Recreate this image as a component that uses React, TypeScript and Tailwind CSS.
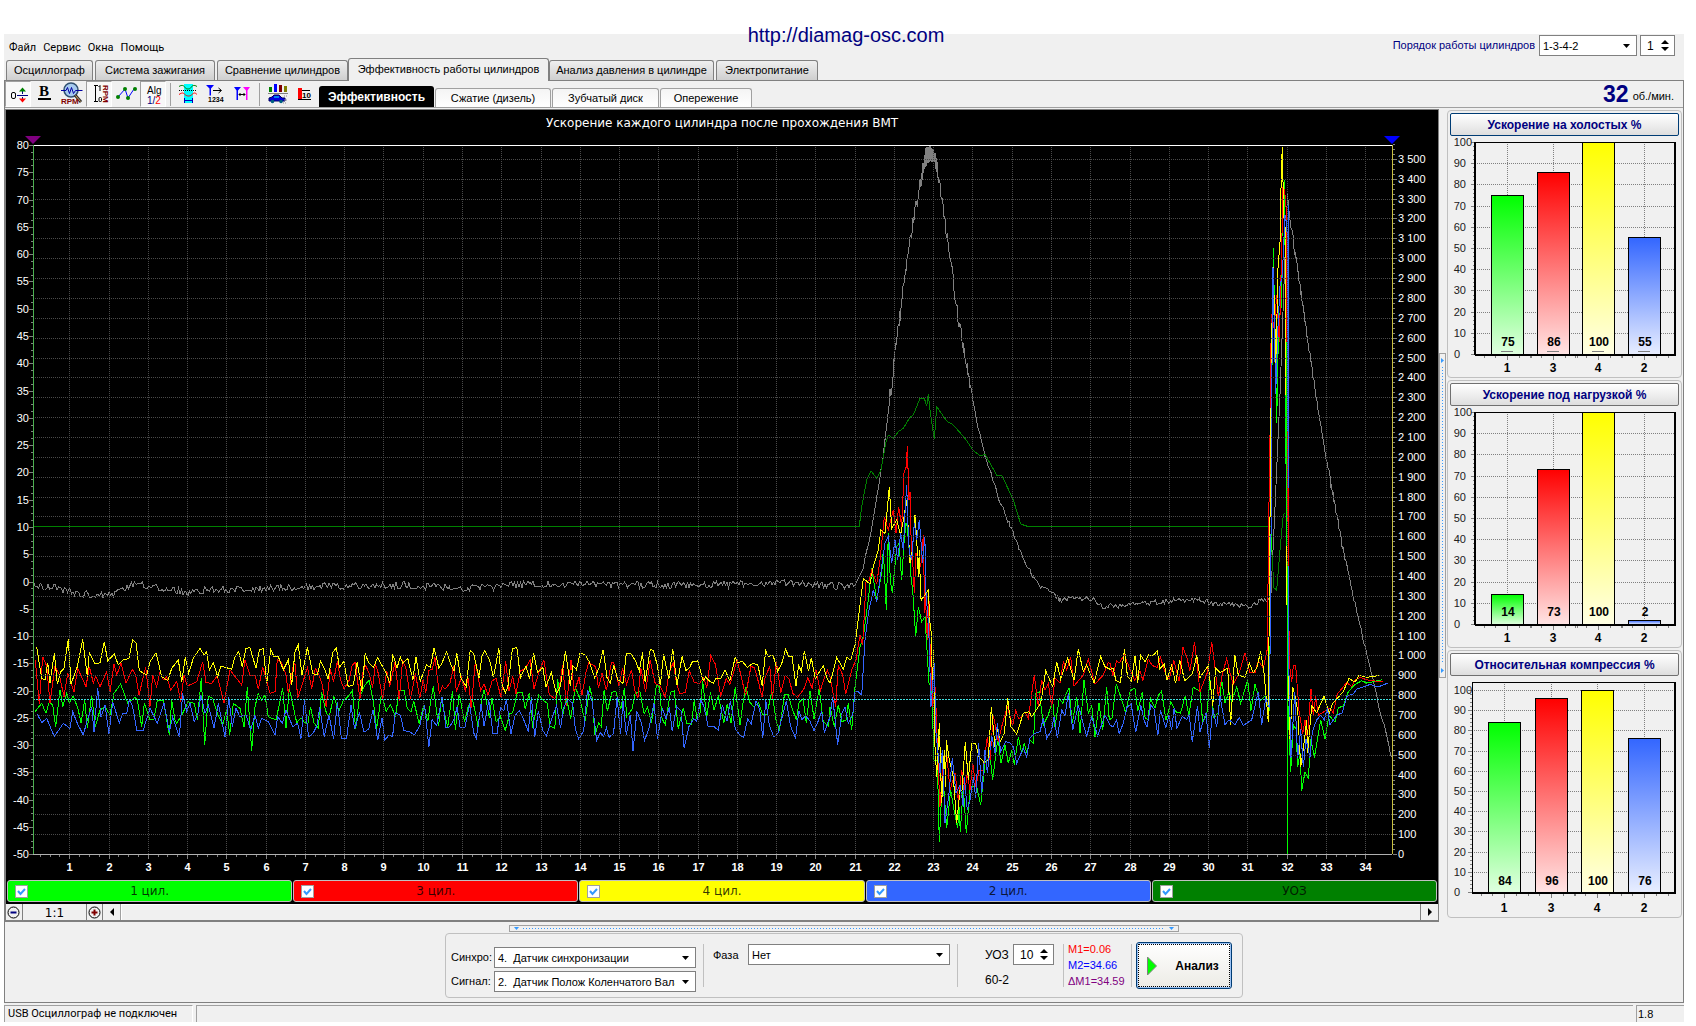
import { useState } from 'react'
import type { ReactNode } from 'react'
import { clsx } from 'clsx'

type Point = [number, number]

const MAIN_TABS = [
  { label: 'Осциллограф', width: 'w-[87px]' },
  { label: 'Система зажигания', width: 'w-[120px]' },
  { label: 'Сравнение цилиндров', width: 'w-[131px]' },
  { label: 'Эффективность работы цилиндров', width: 'w-[201px]' },
  { label: 'Анализ давления в цилиндре', width: 'w-[165px]' },
  { label: 'Электропитание', width: 'w-[102px]' },
]

const SUB_TABS = [
  { label: 'Эффективность', width: 'w-[115px]' },
  { label: 'Сжатие (дизель)', width: 'w-[116px]' },
  { label: 'Зубчатый диск', width: 'w-[107px]' },
  { label: 'Опережение', width: 'w-[92px]' },
]

const LEGEND = [
  { label: '1 цил.', bg: 'bg-[#00ff00]' },
  { label: '3 цил.', bg: 'bg-[#ff0000]' },
  { label: '4 цил.', bg: 'bg-[#ffff00]' },
  { label: '2 цил.', bg: 'bg-[#3366ff]' },
  { label: 'УОЗ', bg: 'bg-[#008000]' },
]

/* ---------- traces ---------- */

// raw "x,y" pairs -> plot coordinates
function seg(x0: number, y0: number, sx: number, sy: number, raw: string): Point[] {
  return raw
    .trim()
    .split(/\s+/)
    .map((p) => {
      const [x, y] = p.split(',').map(Number)
      return [x0 + x / sx, y0 + y / sy]
    })
}

function rng(seed: number) {
  let s = seed
  return () => {
    s = (s * 16807) % 2147483647
    return s / 2147483647
  }
}

// idle running: jumps up and down around the mean with a rare spike
function idle(seed: number, from: number, to: number, mean: number, amp: number): Point[] {
  const rand = rng(seed)
  const out: Point[] = []
  let x = from
  let side = 1
  while (x < to) {
    const spike = rand() > 0.9 ? 1.5 : 1
    out.push([x, mean + side * amp * rand() * spike])
    x += 2.5 + rand() * 3
    if (rand() > 0.35) side = -side
  }
  return out
}

// fine jitter along a base line
function jitter(seed: number, base: Point[], amp: number, step = 1.5): Point[] {
  const rand = rng(seed)
  const out: Point[] = []
  for (let i = 0; i < base.length - 1; i++) {
    const [x1, y1] = base[i]
    const [x2, y2] = base[i + 1]
    for (let x = x1; x < x2; x += step) {
      out.push([x, y1 + ((y2 - y1) * (x - x1)) / (x2 - x1) + (rand() - 0.5) * amp])
    }
  }
  return out
}

const a = (raw: string) => seg(0, 560, 3, 3, raw)
const b = (raw: string) => seg(830, 560, 3, 3, raw)
const c = (raw: string) => seg(830, 130, 3, 3, raw)
const d = (raw: string) => seg(1200, 130, 3, 2.119, raw)

const YELLOW: Point[] = [
  ...a('110,262 125,355 135,360 143,308 150,368 163,278 172,372 182,335 192,325 205,236 213,372 232,320 248,238 262,350 268,278 285,312 300,308 313,246 323,302 343,282 355,315 370,300 387,295 398,240 408,248 418,332 440,345 450,305 468,278 485,350 503,362 515,325 535,300 545,365 556,292 566,340 580,295 600,265 612,285 620,275 628,330 640,308 653,350 663,318 695,328 705,290 716,275 727,320 738,265 750,263 768,325 778,270 790,265 800,372 812,268 822,290 835,290 850,330 865,300 875,375 885,275 895,255'),
  ...idle(41, 302, 829, 667, 20),
  ...b('0,370 20,292 40,328 50,292 62,300 75,255 100,55 120,72 130,20'),
  ...c('145,1260 152,1200 165,1210 178,1070 185,1195 200,1170 212,1215 220,1170 230,1110 240,1300 247,1260 255,1155 262,1260 265,1340 268,1260 272,1400'),
  ...b('274,120 295,90 300,190 305,230 307,400 311,270 315,560 320,650 328,490 335,730 343,570 347,680 349,540 358,600 370,650 380,790 390,690 396,690 406,545 415,660 425,550 437,550 447,590 463,608 475,600 484,440 495,560 503,500 510,545 523,520 533,415 543,500 560,522 580,460 597,455 605,470 632,430 647,332 668,380 680,305 692,358 713,295 732,360 745,268 760,335 770,315 792,368 812,290 825,320 840,328'),
  ...idle(77, 1113, 1198, 666, 17),
  ...d('0,1160 25,1135 38,1220 47,1140 60,1150 83,1140 92,1260 104,1112 115,1155 135,1160 148,1130 160,1150 170,1140 182,1105 192,1150 205,1255 209,900 212,650 216,410 219,290 224,390 228,520 233,300 240,240 244,90 247,36 251,180 257,220 259,880 262,1060 264,1130 270,1290 278,1180 285,1200 293,1230 302,1350 312,1300 320,1250 323,1320 335,1220 350,1235 372,1200 388,1235 398,1215 430,1190 447,1162 465,1170 478,1155 500,1160 537,1156'),
]

const RED: Point[] = [
  ...a('106,300 118,432 128,290 140,318 150,428 165,318 178,345 192,410 203,340 222,395 233,325 258,380 268,320 280,368 287,348 300,380 320,335 330,395 342,312 350,345 363,310 378,370 397,328 407,345 417,405 437,320 450,440 458,345 470,380 480,335 490,360 500,350 512,390 530,365 542,425 552,345 562,378 590,365 608,305 618,368 635,370 652,348 672,428 690,330 725,375 735,300 750,345 765,345 775,388 788,320 810,400 825,395 832,298 845,310 858,345 865,400 880,318 885,310 893,415'),
  ...idle(1203, 302, 829, 680, 20),
  ...b('0,350 17,440 25,315 38,345 47,402 65,330 78,300 90,225 98,255 108,65 117,62 125,30 140,72 150,0'),
  ...c('152,1270 163,1160 175,1200 190,1140 198,1210 206,1130 215,1190 222,1030 229,1010 232,948 237,1110 240,1085 244,1250 248,1290 253,1390 258,1270 272,1310 280,1215 284,1450'),
  ...b('286,100 292,240 297,120 300,250 308,440 316,380 322,560 330,740 340,600 350,580 360,690 375,640 385,720 395,630 405,690 412,640 420,690 428,610 438,680 447,630 460,630 472,530 480,600 490,465 505,545 515,500 532,440 548,498 557,452 567,478 585,455 595,475 613,345 625,440 635,360 645,390 655,370 665,440 675,355 690,370 700,305 710,330 722,292 732,378 760,345 775,298 795,372 820,345 835,308 840,310'),
  ...idle(915, 1113, 1198, 668, 21),
  ...d('0,1190 22,1150 35,1085 45,1140 55,1200 68,1150 80,1120 90,1150 100,1175 118,1150 135,1108 150,1150 165,1150 175,1125 190,1140 202,1100 206,830 210,650 212,480 215,390 222,420 230,350 238,450 245,250 249,120 254,130 260,180 260,450 263,760 268,1130 275,1170 280,1135 287,1135 297,1230 308,1280 315,1250 322,1290 333,1185 340,1240 347,1200 355,1240 390,1225 400,1235 412,1195 430,1180 440,1170 455,1180 465,1165 480,1160 500,1165 550,1170'),
]

const GREEN: Point[] = [
  ...a('105,455 125,430 138,460 148,425 158,435 167,500 180,390 188,440 200,400 208,430 220,408 235,450 243,490 254,420 262,505 275,405 286,500 300,450 315,440 330,465 342,400 362,372 383,430 405,412 412,420 425,500 433,430 450,480 462,478 472,420 490,420 508,525 515,420 525,480 530,490 548,460 565,425 583,430 592,480 604,355 614,555 625,408 638,415 650,455 668,495 680,450 689,525 700,430 720,445 732,500 742,382 755,572 765,440 775,400 785,420 795,405 805,470 828,480 848,385 858,505 868,385 890,488'),
  ...idle(5150, 301, 829, 708, 23),
  ...b('0,440 13,500 25,435 35,485 48,480 55,430 65,510 75,380 90,260 100,230 115,120 125,25 140,120 155,40'),
  ...c('160,1260 169,1440 175,1210 181,1350 187,1390 200,1250 207,1240 215,1350 222,1240 228,1180 232,1190 240,1290'),
  ...b('243,50 248,90 257,230 265,140 275,185 285,170 297,370 305,385 312,600 322,600 328,845 338,640 350,805 362,690 372,750 383,805 387,740 391,815 400,680 409,820 420,690 428,680 440,680 452,735 465,610 480,590 488,660 500,560 505,540 513,610 525,555 535,610 545,570 553,615 565,530 575,580 583,550 590,580 600,540 610,550 618,400 628,395 640,495 655,465 668,420 675,500 688,415 698,430 707,405 717,385 727,490 740,410 750,520 762,360 775,460 785,435 795,530 807,430 818,510 830,380 838,480'),
  ...idle(333, 1112, 1198, 702, 20),
  ...d('0,1190 8,1255 20,1240 30,1165 42,1245 55,1235 65,1165 75,1215 87,1190 95,1210 110,1180 122,1215 143,1165 153,1230 165,1175 180,1210 195,1200 208,1230 213,900 216,500 220,250 224,400 230,620 236,400 243,380 247,180 253,105 256,300 259,870 262,930 262,1532 264,1220 272,1360 280,1260 288,1270 293,1350 300,1320 305,1400 315,1360 325,1375 333,1290 343,1330 362,1250 375,1290 387,1240 405,1255 415,1225 430,1220 445,1190 465,1175 485,1167 500,1172 545,1165'),
]

const BLUE: Point[] = [
  ...a('112,462 125,488 140,475 163,530 190,490 210,505 218,455 232,490 250,525 262,480 275,440 282,515 293,385 303,470 315,435 327,522 338,425 358,490 368,460 380,462 388,420 398,440 410,510 430,510 450,445 472,490 492,430 508,515 518,470 538,530 548,400 560,455 570,430 583,485 593,465 603,405 615,460 625,435 642,505 655,430 675,530 686,412 697,500 708,445 720,470 738,465 752,510 765,465 775,505 785,475 805,485 825,525 833,470 847,490 858,450 878,500 893,490'),
  ...idle(8088, 301, 829, 720, 21),
  ...b('0,470 8,410 23,555 35,460 45,440 55,490 68,465 75,395 85,395 95,405 105,240 115,160 130,90 140,125 155,20'),
  ...c('165,1240 175,1220 185,1300 195,1230 203,1290 212,1210 220,1260 226,1130 230,1065 234,1190 238,1270 245,1290 253,1180 260,1230 268,1170 278,1300 284,1220 287,1290'),
  ...b('288,100 296,200 303,440 313,310 318,520 330,640 337,570 345,790 357,700 367,595 378,700 390,675 400,740 403,650 412,750 420,720 430,650 437,715 446,550 455,700 465,570 472,640 485,525 495,580 502,490 512,575 527,545 540,548 550,560 560,610 580,565 590,590 600,535 615,520 630,515 640,475 650,535 665,510 672,470 682,535 695,450 705,468 715,400 728,510 745,435 770,530 785,470 803,528 825,465 840,495'),
  ...idle(64, 1113, 1198, 720, 17),
  ...d('0,1275 18,1235 28,1310 38,1225 50,1265 60,1200 75,1260 87,1250 105,1260 118,1245 130,1262 155,1250 175,1190 185,1260 197,1205 208,1225 212,1000 215,560 219,290 227,560 233,430 240,330 247,310 255,180 260,200 262,230 264,640 266,1130 273,1330 284,1190 293,1330 302,1270 310,1350 318,1290 330,1330 337,1275 350,1250 362,1240 373,1250 382,1225 390,1260 410,1240 427,1235 440,1200 460,1195 470,1185 490,1180 510,1175 535,1180 563,1172'),
]

const ADVANCE: Point[] = [
  [33, 526.5],
  ...c('88,1189 95,1130 110,1050 123,1022 140,1045 153,1020 168,935 175,915 190,925 205,905 220,895 240,862 250,855 270,805 283,805 290,828 295,793 300,840 313,928 320,830 350,873 370,885 405,925 430,962 452,978 465,973 500,1035 515,1035 550,1110 572,1182 592,1189'),
  ...d('213,840 216,900 222,970 230,975 240,890 250,815 255,812'),
]

const SPEED: Point[] = [
  ...jitter(19, [[34, 587], [48, 586], [70, 592], [100, 596], [112, 595], [135, 584], [165, 588], [188, 593], [205, 590], [260, 589], [330, 586], [400, 585], [450, 588], [480, 588], [530, 584], [620, 585], [700, 585], [780, 583], [840, 586], [855, 584]], 7),
  ...b('75,75 100,25'),
  ...jitter(23, c('105,1290 125,1200 140,1100 158,990 170,890 180,800'), 4),
  ...jitter(37, c('180,800 195,680 210,550 230,400 250,270 275,140 285,95 300,75 313,75 320,110 340,240 360,380 385,560 400,650 425,790'), 16, 0.8),
  ...jitter(43, c('425,790 450,920 465,980 490,1050 515,1130 540,1185 570,1265 597,1320'), 5),
  ...jitter(29, [...b('600,35 610,50 635,85 665,98 690,120 715,115 785,115 820,140'), [1130, 605], [1180, 600], ...d('0,995 30,1003 70,1005 150,1010 190,995 215,993')], 5),
  ...d('215,950 225,800 240,560 255,270 262,145'),
  ...jitter(31, d('262,145 270,190 290,280 320,430 360,620 390,740 430,890'), 9, 0.8),
  ...jitter(53, d('430,890 470,1020 500,1110 530,1200 577,1335'), 5),
]

// the speed signal swings between neighbouring teeth around its maximum
const SPEED_PEAK = c('271,150 273,170 275,128 277,150 279,100 281,130 283,80 285,118 286,55 289,108 290,52 292,98 294,50 296,95 298,48 300,95 302,48 304,95 306,55 308,95 310,60 312,96 314,68 316,110 318,82 320,125 322,95 324,145')

const toPoints = (pts: Point[]) => pts.map(([x, y]) => `${x.toFixed(1)},${y.toFixed(1)}`).join(' ')

const PLOT = { left: 33, right: 1392, top: 145, bottom: 854 }
const timeX = (t: number) => Math.round(31 + t * 39.27) - 0.5
const levelY = (v: number) => Math.round(581.5 - v * 5.456) + 0.5
const rpmY = (v: number) => Math.round(854 - v * 0.1986) + 0.5

function MainChart({ visible }: { visible: boolean[] }) {
  const levels = Array.from({ length: 27 }, (_, i) => 80 - i * 5)
  const speeds = Array.from({ length: 36 }, (_, i) => i * 100)
  const times = Array.from({ length: 34 }, (_, i) => i + 1)
  const { left, right, top, bottom } = PLOT

  return (
    <svg
      viewBox="6 110 1432 770"
      className="block h-auto w-full bg-black font-['Liberation_Sans',Arial,sans-serif] text-[11px]"
      role="img"
      aria-label="Ускорение каждого цилиндра после прохождения ВМТ"
    >
      <text x="722" y="127" textAnchor="middle" fill="#fff" className="font-['DejaVu_Sans',Verdana,sans-serif] text-[12px]">
        Ускорение каждого цилиндра после прохождения ВМТ
      </text>
      <g fill="none" strokeWidth="1" shapeRendering="crispEdges">
        <polyline points={toPoints(SPEED)} stroke="#808080" />
        <polyline points={toPoints(SPEED_PEAK)} stroke="#808080" />
        {visible[4] && <polyline points={toPoints(ADVANCE)} stroke="#008000" />}
        {visible[0] && <polyline points={toPoints(GREEN)} stroke="#00ff00" />}
        {visible[1] && <polyline points={toPoints(RED)} stroke="#ff0000" />}
        {visible[2] && <polyline points={toPoints(YELLOW)} stroke="#ffff00" />}
        {visible[3] && <polyline points={toPoints(BLUE)} stroke="#3366ff" />}
        <g stroke="#4a4a4a" strokeDasharray="1 1">
          {times.map((t) => (
            <path key={t} d={`M${timeX(t)} ${top}V${bottom}`} />
          ))}
          {speeds.slice(1).map((v) => (
            <path key={v} d={`M${left} ${rpmY(v)}H${right}`} />
          ))}
        </g>
        {/* engine stop: every trace drops at once */}
        {visible[3] && <path d="M1288.5 205V488" stroke="#3366ff" />}
        {visible[1] && <path d="M1286.5 250V342M1288.5 488V566" stroke="#ff0000" />}
        {visible[0] && <path d="M1286.5 342V546M1287.5 566V854" stroke="#00ff00" />}
        <path d={`M${left} 699.5H${right}`} stroke="#40e0e0" strokeDasharray="2 1" />
        <path d={`M${left} 145.5H${right}`} stroke="#fff" />
        <path d={`M${left} 854.5H${right}`} stroke="#b0b0b0" />
        <path d="M33.5 145V854" stroke="#4caf50" />
        <path d="M1392.5 145V854" stroke="#c8c040" />
      </g>
      <g stroke="#808080" shapeRendering="crispEdges">
        {levels.map((v) => (
          <path key={v} d={`M29 ${levelY(v)}h4`} />
        ))}
        {levels.slice(0, -1).flatMap((v) =>
          [1, 2, 3].map((k) => <path key={`${v}-${k}`} d={`M31 ${levelY(v - k * 1.25)}h2`} />)
        )}
        {speeds.map((v) => (
          <path key={v} d={`M1393 ${rpmY(v)}h4M1393 ${rpmY(v + 25)}h2M1393 ${rpmY(v + 50)}h2M1393 ${rpmY(v + 75)}h2`} />
        ))}
        {times.map((t) => (
          <path key={t} d={`M${timeX(t)} 855v4M${timeX(t - 0.25)} 855v2M${timeX(t - 0.5)} 855v2M${timeX(t - 0.75)} 855v2`} />
        ))}
      </g>
      <g fill="#fff">
        {levels.map((v) => (
          <text key={v} x="29" y={levelY(v) + 3} textAnchor="end">
            {v}
          </text>
        ))}
        {speeds.map((v) => (
          <text key={v} x="1398" y={rpmY(v) + 3}>
            {v >= 1000 ? `${Math.floor(v / 1000)} ${String(v % 1000).padStart(3, '0')}` : v}
          </text>
        ))}
        {times.map((t) => (
          <text key={t} x={timeX(t)} y="871" textAnchor="middle" fontWeight="bold">
            {t}
          </text>
        ))}
      </g>
      <path d="M25 136h16l-8 8z" fill="#800080" />
      <path d="M1384 136h16l-8 8z" fill="#0000ff" />
    </svg>
  )
}

/* ---------- side bar charts ---------- */

type BarSet = {
  title: string
  values: number[]
  left: number
  top: number
  top100: number
  centers: number[]
  focused?: boolean
}

const BAR_SETS: BarSet[] = [
  { title: 'Ускорение на холостых %', values: [75, 86, 100, 55], left: 27, top: 5, top100: 5, centers: [59, 105, 150, 196], focused: true },
  { title: 'Ускорение под нагрузкой %', values: [14, 73, 100, 2], left: 27, top: 5, top100: 5, centers: [59, 105, 150, 196] },
  { title: 'Относительная компрессия %', values: [84, 96, 100, 76], left: 24, top: 5, top100: 13, centers: [56, 103, 149, 196] },
]
const CYLINDERS = [
  { id: 1, color: '#00ff00', pale: '#e0ffe0' },
  { id: 3, color: '#ff0000', pale: '#ffe4e4' },
  { id: 4, color: '#ffff00', pale: '#ffffe4' },
  { id: 2, color: '#3366ff', pale: '#e8eeff' },
]

function BarPanel({ set, index }: { set: BarSet; index: number }) {
  const zero = index === 2 ? 215 : 217
  const y = (v: number) => Math.round(zero - ((zero - set.top100) * v) / 100)
  const marks = Array.from({ length: 11 }, (_, i) => i * 10)

  return (
    <section className="rounded-[4px] border border-[#c0c0c0] px-[2px] pt-[2px] pb-px">
      <button
        type="button"
        className={clsx(
          'block h-[23px] w-full rounded-[2px] border bg-linear-to-b from-white to-[#dedede] text-[12px] leading-[20px] font-bold text-[#000080]',
          set.focused ? 'border-[#003c74]' : 'border-[#707070]'
        )}
      >
        {set.title}
      </button>
      <svg
        viewBox="2 -1 229 240"
        className="block h-auto w-full font-['Liberation_Sans',Arial,sans-serif]"
        role="img"
        aria-label={set.title}
      >
        <defs>
          {CYLINDERS.map((cyl) => (
            <linearGradient key={cyl.id} id={`bar-${index}-${cyl.id}`} x1="0" y1="0" x2="0" y2="1">
              <stop offset="0" stopColor={cyl.color} />
              <stop offset="1" stopColor={cyl.pale} />
            </linearGradient>
          ))}
        </defs>
        <g stroke="#808080" shapeRendering="crispEdges">
          {marks.map((m) => (
            <path key={m} d={`M${set.left} ${y(m) + 0.5}H226`} strokeDasharray="1 1" />
          ))}
          {marks.map((m) => (
            <path key={m} d={`M${set.left - 4} ${y(m) + 0.5}h4`} />
          ))}
          {marks.slice(1).flatMap((m) =>
            [2, 4, 6, 8].map((k) => <path key={`${m}-${k}`} d={`M${set.left - 2} ${y(m - k) + 0.5}h2`} />)
          )}
          {set.centers.map((x) => (
            <path key={x} d={`M${x + 0.5} ${set.top}V${zero}`} strokeDasharray="1 1" />
          ))}
          {set.centers.map((x) => (
            <path
              key={x}
              d={`M${x - 22.5} ${zero + 2}v2M${x - 11.5} ${zero + 2}v2M${x + 0.5} ${zero + 2}v4M${x + 12.5} ${zero + 2}v2M${x + 24.5} ${zero + 2}v2`}
            />
          ))}
        </g>
        <g shapeRendering="crispEdges">
          <path d={`M${set.left} ${set.top}V${zero + 1}`} stroke="#000" strokeWidth={set.left > 24 ? 2 : 1} />
          <path d={`M${set.left} ${set.top + 0.5}H228`} stroke="#000" />
          <path d={`M227 ${set.top}V${zero + 2}`} stroke="#000" strokeWidth="2" />
          <path d={`M${set.left} ${zero + 1}H228`} stroke="#000" strokeWidth="2" />
          {set.values.map((v, i) => (
            <rect
              key={i}
              x={set.centers[i] - 15.5}
              y={y(v) + 0.5}
              width="32"
              height={zero - y(v)}
              fill={`url(#bar-${index}-${CYLINDERS[i].id})`}
              stroke="#000"
            />
          ))}
          {index === 0 &&
            set.centers.map((x) => <path key={x} d={`M${x - 6} 214.5h12`} stroke="#808080" />)}
        </g>
        <g className="text-[11px]" fill="#202020">
          {marks.map((m) => (
            <text key={m} x={m === 100 ? 24 : m === 0 ? 12 : 18} y={y(m) + 4} textAnchor="end">
              {m}
            </text>
          ))}
        </g>
        <g className="text-[12px]" fontWeight="bold" textAnchor="middle">
          {set.values.map((v, i) => (
            <text key={i} x={set.centers[i] + 1} y={index === 2 ? 208 : 209}>
              {v}
            </text>
          ))}
          {CYLINDERS.map((cyl, i) => (
            <text key={cyl.id} x={set.centers[i]} y="235">
              {cyl.id}
            </text>
          ))}
        </g>
      </svg>
    </section>
  )
}

/* ---------- toolbar ---------- */

function ToolButton({ label, pressed, children }: { label: string; pressed?: boolean; children: ReactNode }) {
  return (
    <button
      type="button"
      title={label}
      aria-label={label}
      aria-pressed={!!pressed}
      className={clsx(
        'h-[26px] w-[26px] shrink-0 border',
        pressed ? 'border-[#a0a0a0] border-r-white border-b-white bg-[#f8f8f8]' : 'border-transparent'
      )}
    >
      <svg viewBox="1 0 24 24" className="block h-6 w-6 font-['Liberation_Sans',sans-serif]" fill="none">
        {children}
      </svg>
    </button>
  )
}

const ToolSeparator = () => <div className="mx-[3px] h-[23px] w-px shrink-0 bg-[#a0a0a0]" />

function Toolbar() {
  return (
    <div className="flex items-center gap-px">
      <ToolButton label="Смещение нуля" pressed>
        <rect x="6.5" y="10.5" width="4" height="6" rx="1.5" stroke="#000" />
        <path d="M12 13.500h11M17.500 8v4M17.500 15v3" stroke="#000080" />
        <path d="M14 9.500l3.500-4 3.500 4z" fill="#008000" />
        <path d="M14 16.500l3.500 4 3.500-4z" fill="#ff0000" />
      </ToolButton>
      <ToolButton label="Жирная линия">
        <text x="7" y="14" fill="#000" fontWeight="bold" className="font-['Liberation_Serif',serif] text-[15px]">
          B
        </text>
        <path d="M6 17h13" stroke="#000" strokeWidth="2" />
      </ToolButton>
      <ToolButton label="Масштаб оборотов">
        <circle cx="12" cy="8" r="7" fill="#a6caf0" stroke="#305070" strokeWidth="1.500" />
        <path d="M2 8.500h5l1.500-3 2 6 2-6 2 6 2-3h7" stroke="#0000a0" />
        <path d="M16 13l6 7" stroke="#303030" strokeWidth="3" />
        <path d="M16.500 13.500l5 6" stroke="#e0b060" />
        <text x="2" y="22" fill="#800000" className="text-[8px]" fontWeight="bold">
          RPM
        </text>
      </ToolButton>
      <ToolButton label="Шкала оборотов" pressed>
        <path d="M8 3.500h4M9.500 3v17M8 19.500h4" stroke="#000" shapeRendering="crispEdges" />
        <path d="M12.500 5l1.500-1.500V9" stroke="#000" />
        <rect x="13" y="15.500" width="2.500" height="4" rx="1" stroke="#000" />
        <text transform="translate(17 3) rotate(90)" fill="#800000" className="text-[8px]" fontWeight="bold">
          RPM
        </text>
      </ToolButton>
      <ToolButton label="Точки">
        <path d="M5 15l7-8 3 9 6-9" stroke="#0000ff" />
        <g fill="#008000">
          <circle cx="5" cy="15" r="2" />
          <circle cx="12" cy="7" r="2" />
          <circle cx="15" cy="16" r="2" />
          <circle cx="22" cy="7" r="2" />
        </g>
      </ToolButton>
      <ToolButton label="Алгоритм" pressed>
        <text x="7" y="12" fill="#000" className="text-[10px]">
          Alg
        </text>
        <text x="7" y="22" fill="#000080" className="text-[10px]">
          1/<tspan fill="#ff0000">2</tspan>
        </text>
      </ToolButton>
      <ToolSeparator />
      <ToolButton label="Диапазон">
        <rect x="9" y="2" width="9" height="19" fill="#00ffff" />
        <path d="M4 4.500c3-2 5-1 6 1s5 2 6 0 3-3 6-1" stroke="#008000" />
        <path d="M4 8.500h18" stroke="#000" strokeDasharray="1 1" />
        <path d="M4 12.500c3-2 4-2 6 0s5 2 7 0 3-2 5 0" stroke="#ff0000" />
        <path d="M9.500 16v5M17.500 16v5M9.500 18.500h8" stroke="#0000c0" />
      </ToolButton>
      <ToolButton label="Порядок">
        <path d="M4 3h8L9 6.500v7H7.500v-7z" fill="#0000ff" />
        <path d="M11 8.500h8M16.500 6l3 2.500-3 2.500" stroke="#000" />
        <text x="6" y="20" fill="#000" className="text-[7px]" fontWeight="bold">
          1234
        </text>
      </ToolButton>
      <ToolButton label="Маркеры">
        <path d="M5 5h7L9 8.500V18H7.500V8.500z" fill="#0000ff" />
        <path d="M14 5h7l-2.500 3.500V18H17V8.500z" fill="#ff00ff" />
        <path d="M10 12.500h6M11.500 11L10 12.500l1.500 1.500M14.500 11l1.500 1.500-1.500 1.500" stroke="#000" />
      </ToolButton>
      <ToolSeparator />
      <ToolButton label="Тест автомобиля">
        <path d="M5 5h3v5H5z" fill="#008000" />
        <path d="M10 2h3v8h-3z" fill="#0000ff" />
        <path d="M15 3h3v7h-3z" fill="#800000" />
        <path d="M20 4h3v6h-3z" fill="#808000" />
        <path d="M4 11.500h20" stroke="#808080" />
        <path d="M5 16l3-1 2-2h5l3 3h3v3H5z" fill="#0000e0" stroke="#000060" />
        <path d="M10 15h5" stroke="#00ffff" />
        <circle cx="8.500" cy="19.500" r="1.800" fill="#006080" />
        <circle cx="17" cy="19.500" r="1.800" fill="#006080" />
        <path d="M20 14h4M20 18h4M19 21h4" stroke="#909090" strokeDasharray="1 1" />
      </ToolButton>
      <ToolButton label="Результат">
        <path d="M7 6h4v11H7z" fill="#ff0000" />
        <path d="M7 17.500h13M11 8.500h8" stroke="#000" />
        <text x="11" y="16" fill="#000" className="text-[8px]" fontWeight="bold">
          10
        </text>
      </ToolButton>
    </div>
  )
}

/* ---------- form controls ---------- */

function Combo({ id, value, className }: { id: string; value: string; className?: string }) {
  return (
    <div className={clsx('relative', className)}>
      <select
        id={id}
        className="block h-[21px] w-full appearance-none overflow-hidden border border-[#808080] bg-white pr-5 pl-[3px] text-[11px] leading-[18px] text-black"
      >
        <option>{value}</option>
      </select>
      <svg viewBox="0 0 7 4" className="pointer-events-none absolute top-[9px] right-[7px] h-1 w-[7px]">
        <path d="M0 0h7L3.500 4z" fill="#000" />
      </svg>
    </div>
  )
}

function Spin({ id, label, initial, className }: { id: string; label: string; initial: number; className?: string }) {
  const [value, setValue] = useState(initial)
  return (
    <div className={clsx('flex h-[21px] items-center border border-[#808080] bg-white pr-[5px]', className)}>
      <input
        id={id}
        aria-label={label}
        value={value}
        onChange={(e) => setValue(Number(e.target.value) || 0)}
        className="w-0 min-w-0 flex-1 pl-1.5 text-[12px] leading-[18px] text-black outline-none"
      />
      <div className="flex flex-col gap-[3px]">
        <button type="button" aria-label="Больше" onClick={() => setValue(value + 1)}>
          <svg viewBox="0 0 8 4" className="block h-1 w-2">
            <path d="M0 4h8L4 0z" fill="#000" />
          </svg>
        </button>
        <button type="button" aria-label="Меньше" onClick={() => setValue(value - 1)}>
          <svg viewBox="0 0 8 4" className="block h-1 w-2">
            <path d="M0 0h8L4 4z" fill="#000" />
          </svg>
        </button>
      </div>
    </div>
  )
}

const Divider = () => <div className="my-1 w-px shrink-0 bg-[#c0c0c0]" />

function Controls() {
  return (
    <div className="mx-auto flex h-[65px] w-[798px] rounded-[4px] border border-[#c0c0c0] py-1.5 text-[12px]">
      <div className="grid w-[257px] shrink-0 grid-cols-[43px_202px] content-center gap-y-[3px] pt-2 pl-[5px]">
        <label htmlFor="sync" className="self-center text-[11px]">
          Синхро:
        </label>
        <Combo id="sync" value="4.&nbsp; Датчик синхронизации" />
        <label htmlFor="signal" className="self-center text-[11px]">
          Сигнал:
        </label>
        <Combo id="signal" value="2.&nbsp; Датчик Полож Коленчатого Вала" />
      </div>
      <Divider />
      <div className="flex w-[253px] shrink-0 items-start pt-1 pl-[9px]">
        <label htmlFor="phase" className="w-[35px] pt-0.5 text-[11px] leading-[18px]">
          Фаза
        </label>
        <Combo id="phase" value="Нет" className="w-[202px]" />
      </div>
      <Divider />
      <div className="flex w-[105px] shrink-0 flex-col gap-1 pt-1 pl-[27px]">
        <div className="flex items-center">
          <label htmlFor="advance" className="w-7">
            УОЗ
          </label>
          <Spin id="advance" label="УОЗ" initial={10} className="w-[41px]" />
        </div>
        <span className="leading-[22px]">60-2</span>
      </div>
      <Divider />
      <div className="w-[67px] shrink-0 pt-px pl-[4px] text-[11px] leading-[16px] whitespace-nowrap">
        <div className="text-[#ff0000]">M1=0.06</div>
        <div className="text-[#0000ff]">M2=34.66</div>
        <div className="text-[#800080]">ΔM1=34.59</div>
      </div>
      <Divider />
      <button
        type="button"
        className="ml-1 flex h-[47px] w-24 shrink-0 items-center self-center rounded-[3px] border border-[#003c74] bg-linear-to-b from-white to-[#ecebe5] p-px text-[12px] font-bold text-black shadow-[inset_0_0_0_1px_#9cc3f5]"
      >
        <span className="flex h-full w-full items-center border border-dotted border-black pl-2">
          <svg viewBox="0 0 10 20" className="h-5 w-[10px]">
            <path d="M.5 1v18l9-9z" fill="#00ff00" stroke="#808080" />
          </svg>
          <span className="flex-1 pl-2">Анализ</span>
        </span>
      </button>
    </div>
  )
}

/* ---------- page ---------- */

export default function App() {
  const [tab, setTab] = useState(3)
  const [subTab, setSubTab] = useState(0)
  const [visible, setVisible] = useState([true, true, true, true, true])

  return (
    <div className="relative bg-white pt-[34px] pr-3 pl-1 font-['Liberation_Sans',Arial,sans-serif] text-black">
      <a href="http://diamag-osc.com" className="absolute top-[22px] left-1/2 -translate-x-1/2 pr-1 text-[20px] leading-[26px] text-[#000080]">
        http://diamag-osc.com
      </a>
      <div className="bg-[#f0f0f0]">
        <div className="flex items-start justify-between">
          <div>
            <nav className="flex h-6 items-center gap-[7px] pt-1 pl-[5px] font-['Roboto','Noto_Sans',sans-serif] text-[11px]">
              {['Файл', 'Сервис', 'Окна', 'Помощь'].map((item) => (
                <button key={item} type="button">
                  {item}
                </button>
              ))}
            </nav>
            <div className="flex h-[22px] items-end gap-0.5 pl-0.5" role="tablist">
              {MAIN_TABS.map((t, i) => (
                <button
                  key={t.label}
                  type="button"
                  role="tab"
                  aria-selected={i === tab}
                  onClick={() => setTab(i)}
                  className={clsx(
                    'shrink-0 rounded-t-[3px] border border-b-0 border-[#808080] text-[11px] whitespace-nowrap',
                    t.width,
                    i === tab
                      ? '-mx-0.5 -mb-px h-[23px] bg-[#f0f0f0] pb-0.5'
                      : 'h-5 bg-linear-to-b from-[#efefef] to-[#cfcfcf]'
                  )}
                >
                  {t.label}
                </button>
              ))}
            </div>
          </div>
          <div className="flex items-center gap-[3px] pt-px pr-[9px]">
            <label htmlFor="order" className="pr-px text-[11px] text-[#000080]">
              Порядок работы цилиндров
            </label>
            <Combo id="order" value="1-3-4-2" className="w-[98px]" />
            <Spin id="order-no" label="Номер" initial={1} className="w-[35px]" />
          </div>
        </div>

        <div className="border border-[#808080]">
          <div className="flex h-[27px] items-end justify-between border-b border-[#a0a0a0] pr-[9px]">
            <div className="flex items-end gap-[2px]">
              <Toolbar />
              <div className="flex items-end gap-px" role="tablist">
                {SUB_TABS.map((t, i) => (
                  <button
                    key={t.label}
                    type="button"
                    role="tab"
                    aria-selected={i === subTab}
                    onClick={() => setSubTab(i)}
                    className={clsx(
                      'shrink-0 rounded-t-[3px]',
                      t.width,
                      i === subTab
                        ? 'h-[21px] bg-black text-[12px] font-bold text-white'
                        : 'h-[19px] border border-b-0 border-[#a0a0a0] bg-linear-to-b from-[#f4f4f4] to-white text-[11px]'
                    )}
                  >
                    {t.label}
                  </button>
                ))}
              </div>
            </div>
            <div className="flex items-center gap-1">
              <span className="text-[23px] leading-[26px] font-bold text-[#000080]">32</span>
              <span className="pt-1 text-[11px] leading-[22px]">об./мин.</span>
            </div>
          </div>

          <div className="flex items-start">
            <main className="mt-px min-w-0 flex-1 border border-b-2 border-[#808080]">
              <MainChart visible={visible} />
              <div className="flex gap-px bg-black px-px pb-0.5">
                {LEGEND.map((item, i) => (
                  <label
                    key={item.label}
                    className={clsx(
                      "relative flex h-[22px] flex-1 items-center justify-center rounded-[3px] border border-[#c0c0c0] font-['DejaVu_Sans',Verdana,sans-serif] text-[12px] text-black/80",
                      item.bg
                    )}
                  >
                    <input
                      type="checkbox"
                      checked={visible[i]}
                      onChange={() => setVisible(visible.map((v, k) => (k === i ? !v : v)))}
                      className="absolute left-[7px] h-[13px] w-[13px] appearance-none border border-[#a0a0a0] bg-white"
                    />
                    {visible[i] && (
                      <svg viewBox="0 0 13 13" className="pointer-events-none absolute left-[7px] h-[13px] w-[13px]" fill="none">
                        <path d="M3 6l2.500 3L10 4" stroke="#3399ff" strokeWidth="2" />
                      </svg>
                    )}
                    {item.label}
                  </label>
                ))}
              </div>
              <div className="flex h-4 bg-[#f0f0f0]">
                <button type="button" aria-label="Уменьшить" className="w-[17px] border-r border-[#808080]">
                  <svg viewBox="0 0 15 15" className="h-[15px] w-[15px]" fill="none">
                    <circle cx="7.500" cy="7.500" r="5.500" stroke="#000" />
                    <path d="M4.500 7.500h6" stroke="#000080" strokeWidth="2" />
                  </svg>
                </button>
                <span className="w-16 border-r border-[#808080] text-center font-['DejaVu_Sans',Verdana,sans-serif] text-[12px] leading-[18px]">
                  1:1
                </span>
                <button type="button" aria-label="Увеличить" className="w-4 border-r border-[#808080]">
                  <svg viewBox="0 0 15 15" className="h-[15px] w-[15px]" fill="none">
                    <circle cx="7.500" cy="7.500" r="5.500" stroke="#000" />
                    <path d="M4.500 7.500h6M7.500 4.500v6" stroke="#800000" strokeWidth="2" />
                  </svg>
                </button>
                <button type="button" aria-label="Влево" className="flex w-[18px] items-center justify-center border-r border-[#a0a0a0]">
                  <svg viewBox="0 0 4 8" className="h-2 w-1">
                    <path d="M4 0v8L0 4z" fill="#000" />
                  </svg>
                </button>
                <div className="flex-1 border-t border-l border-white" />
                <button type="button" aria-label="Вправо" className="flex w-[18px] items-center justify-center border-l border-[#808080]">
                  <svg viewBox="0 0 4 8" className="h-2 w-1">
                    <path d="M0 0v8l4-4z" fill="#000" />
                  </svg>
                </button>
              </div>
            </main>

            <div className="flex w-2 shrink-0 self-center">
              <div className="flex h-[325px] w-[7px] flex-col items-center border border-[#a0a0a0] py-1">
                <svg viewBox="0 0 3 5" className="h-[5px] w-[3px]">
                  <path d="M0 0v5l3-2.500z" fill="#3399ff" />
                </svg>
                <div className="my-1 w-px flex-1 bg-[repeating-linear-gradient(#3399ff_0_1px,transparent_1px_3px)]" />
                <svg viewBox="0 0 3 5" className="h-[5px] w-[3px]">
                  <path d="M0 0v5l3-2.500z" fill="#3399ff" />
                </svg>
              </div>
            </div>

            <aside className="mr-px flex w-[235px] shrink-0 flex-col gap-0.5 pt-[2px]">
              {BAR_SETS.map((set, i) => (
                <BarPanel key={set.title} set={set} index={i} />
              ))}
            </aside>
          </div>

          <div className="pt-[3px] pb-1">
            <div className="mx-auto mb-px flex h-[7px] w-[670px] items-center border border-[#a0a0a0] px-1">
              <svg viewBox="0 0 5 3" className="h-[3px] w-[5px]">
                <path d="M0 0h5L2.500 3z" fill="#3399ff" />
              </svg>
              <div className="mx-1 h-px flex-1 bg-[repeating-linear-gradient(90deg,#3399ff_0_1px,transparent_1px_3px)]" />
              <svg viewBox="0 0 5 3" className="h-[3px] w-[5px]">
                <path d="M0 0h5L2.500 3z" fill="#3399ff" />
              </svg>
            </div>
            <Controls />
          </div>
        </div>

        <footer className="mt-0.5 flex h-[17px] gap-[3px] text-[11px] leading-[16px]">
          <div className="w-[189px] border-t border-l border-r border-[#a0a0a0] border-r-white pl-[3px] font-['Roboto','Noto_Sans',sans-serif] whitespace-nowrap">
            USB Осциллограф не подключен
          </div>
          <div className="flex-1 border-t border-l border-[#a0a0a0]" />
          <div className="w-12 border-t border-l border-[#a0a0a0] pl-px">1.8</div>
        </footer>
      </div>
    </div>
  )
}
